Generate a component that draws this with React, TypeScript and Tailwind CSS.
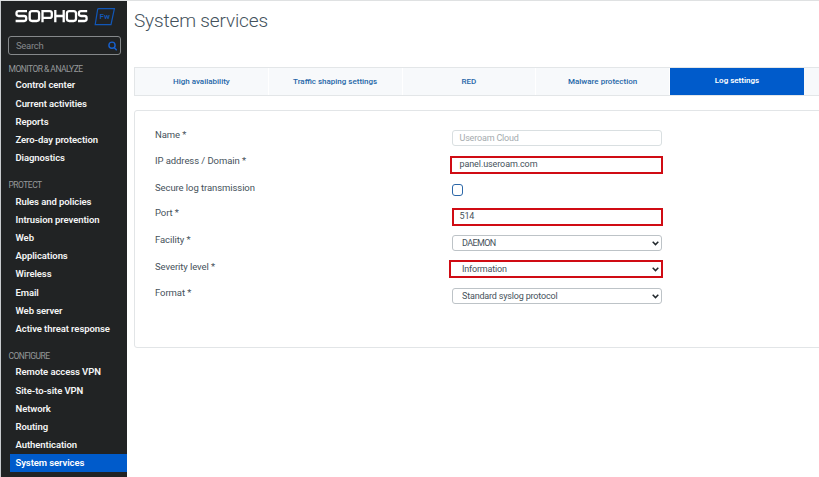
import React from 'react';

const groups = [
  { title: 'MONITOR & ANALYZE', items: ['Control center', 'Current activities', 'Reports', 'Zero-day protection', 'Diagnostics'] },
  {
    title: 'PROTECT',
    items: ['Rules and policies', 'Intrusion prevention', 'Web', 'Applications', 'Wireless', 'Email', 'Web server', 'Active threat response'],
  },
  {
    title: 'CONFIGURE',
    items: ['Remote access VPN', 'Site-to-site VPN', 'Network', 'Routing', 'Authentication', 'System services'],
  },
];

const tabs = ['High availability', 'Traffic shaping settings', 'RED', 'Malware protection', 'Log settings'];

function Logo() {
  return (
    <div className="flex h-[34px] shrink-0 items-start pl-[14px] pt-[6px]">
      <svg width="103" height="20" viewBox="0 0 103 20" fill="none" aria-label="Sophos">
        <g stroke="#ffffff" strokeWidth="2.3">
          <path d="M12 4.1H3.6Q1.5 4.1 1.5 6V7.1Q1.5 9 3.6 9H9.2Q11.2 9 11.2 10.9V12.1Q11.2 14 9.2 14H0.6" />
          <rect x="14.7" y="4.1" width="9.4" height="9.9" rx="2.4" />
          <path d="M27.5 15.2V4.1H34.6Q36.8 4.1 36.8 6.1V8.9Q36.8 10.9 34.6 10.9H27.5" />
          <path d="M40.3 3V15.2M48.7 3V15.2M40.3 9H48.7" />
          <rect x="51.9" y="4.1" width="9.1" height="9.9" rx="2.4" />
          <path d="M72.2 4.1H66Q63.9 4.1 63.9 6V7.1Q63.9 9 66 9H69.6Q71.6 9 71.6 10.9V12.1Q71.6 14 69.6 14H63" />
        </g>
        <path d="M83.7 1.6H99.4L96 17.6H80.2L82.6 2.6Q82.8 1.6 83.7 1.6Z" stroke="#1257b8" strokeWidth="1.2" />
        <text x="84.6" y="12.4" fill="#1257b8" fontSize="8" fontWeight="600" fontFamily="Roboto, sans-serif">Fw</text>
      </svg>
    </div>
  );
}

function Sidebar() {
  return (
    <aside className="flex w-[127px] shrink-0 flex-col border-l border-[#c9cccf] bg-[#212324]">
      <Logo />
      <div className="ml-[7px] mt-[1px] flex h-[19px] w-[113px] shrink-0 items-center justify-between rounded-[3px] border border-[#85888a] pl-[7px] pr-[3px]">
        <span className="text-[9.5px] leading-none tracking-[-0.3px] text-[#85888a]">Search</span>
        <svg width="9" height="10" viewBox="0 0 9 10" fill="none" stroke="#1761cf" strokeWidth="1.4">
          <circle cx="4" cy="4.2" r="3.1" />
          <path d="M6.2 6.5L8.7 9.2" />
        </svg>
      </div>
      <nav className="mt-[7px]">
        {groups.map((g) => (
          <section key={g.title} className="mb-[11px]">
            <h2 className="h-[14px] whitespace-nowrap pl-[7.5px] text-[8.5px] leading-[14px] tracking-[-0.52px] text-[#96999b]">{g.title}</h2>
            {g.items.map((item) => (
              <div
                key={item}
                className={
                  item === 'System services'
                    ? 'ml-[9px] flex h-[18.22px] items-center whitespace-nowrap bg-[#005bcb] pl-[5.5px] pt-px text-[9.5px] font-semibold tracking-[-0.08px] text-white'
                    : 'ml-[9px] flex h-[18.22px] items-center whitespace-nowrap pl-[5.5px] pt-px text-[9.5px] font-semibold tracking-[-0.08px] text-[#f4f5f5]'
                }
              >
                {item}
              </div>
            ))}
          </section>
        ))}
      </nav>
    </aside>
  );
}

function Row({ label, height, children }: { label: string; height: string; children: React.ReactNode }) {
  return (
    <div className={`flex items-start ${height}`}>
      <div className="w-[295px] shrink-0 whitespace-nowrap text-[9.5px] leading-[13px] tracking-[-0.08px] text-[#46525b]">{label}</div>
      {children}
    </div>
  );
}

function Chevron() {
  return (
    <svg width="7" height="5" viewBox="0 0 7 5" fill="none" stroke="#20272c" strokeWidth="1.5">
      <path d="M0.7 0.8L3.5 3.6L6.3 0.8" />
    </svg>
  );
}

export default function App() {
  return (
    <div className="flex h-[477px] w-[819px] overflow-hidden border-t border-[#dfe1e2] bg-white font-['Roboto','Liberation_Sans',sans-serif]">
      <Sidebar />
      <main className="flex min-w-0 flex-1 flex-col pl-[7px]">
        <h1 className="mt-[7px] h-[24px] whitespace-nowrap text-[19px] font-light leading-[25px] tracking-[-0.14px] text-[#44525c]">System services</h1>
        <div className="mt-[35px] flex h-[29px] w-[700px] shrink-0 border border-[#e3e6e8] bg-[#f7f9fb]">
          {tabs.map((tab) => (
            <div
              key={tab}
              className={
                tab === 'Log settings'
                  ? 'flex w-[134px] shrink-0 items-center justify-center bg-[#005bcb] pb-px text-[8px] font-semibold text-white'
                  : 'flex w-[133.75px] shrink-0 items-center justify-center border-r border-white text-[8px] font-medium text-[#2567a8]'
              }
            >
              {tab}
            </div>
          ))}
        </div>
        <section className="mt-[14px] h-[238px] w-[700px] shrink-0 rounded-[3px] border border-[#e2e5e7] pl-[20px] pt-[17px] text-[9px] tracking-[-0.18px] text-[#46525b]">
          <Row label="Name *" height="h-[26px]">
            <div className="ml-[2px] mt-[2px] flex h-[16px] w-[210px] items-center rounded-[3px] border border-[#d9dfe1] pl-[6.5px] pt-px text-[#a5abae]">Useroam Cloud</div>
          </Row>
          <Row label="IP address / Domain *" height="h-[27px]">
            <div className="mt-[2px] flex h-[18px] w-[213px] items-center border-2 border-[#d00c14] pl-[7.5px] tracking-[-0.1px]">panel.useroam.com</div>
          </Row>
          <Row label="Secure log transmission" height="h-[25px]">
            <div className="ml-[2px] mt-[3px] h-[12px] w-[11px] rounded-[3px] border border-[#2c67a8]" />
          </Row>
          <Row label="Port *" height="h-[27px]">
            <div className="ml-[2px] mt-[2px] flex h-[18px] w-[211px] items-center border-2 border-[#d00c14] pl-[5.5px]">514</div>
          </Row>
          <Row label="Facility *" height="h-[27px]">
            <div className="ml-[2px] mt-[2px] flex h-[16px] w-[210px] items-center justify-between rounded-[3px] border border-[#bdc3c7] pl-[9px] pr-[2px]">
              <span className="pt-px tracking-[-0.6px]">DAEMON</span>
              <Chevron />
            </div>
          </Row>
          <Row label="Severity level *" height="h-[26px]">
            <div className="-ml-px mt-0 flex h-[18px] w-[214px] items-center justify-between border-2 border-[#d00c14] pl-[11px] pr-[2px]">
              <span className="pt-[2px]">Information</span>
              <Chevron />
            </div>
          </Row>
          <Row label="Format *" height="h-[26px]">
            <div className="ml-[2px] mt-[2px] flex h-[16px] w-[210px] items-center justify-between rounded-[3px] border border-[#bdc3c7] pl-[9px] pr-[2px]">
              <span className="pt-px">Standard syslog protocol</span>
              <Chevron />
            </div>
          </Row>
        </section>
      </main>
    </div>
  );
}
